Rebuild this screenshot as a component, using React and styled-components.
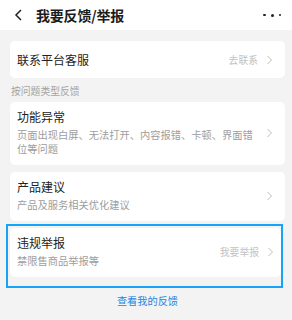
import styled, { createGlobalStyle } from 'styled-components'

const GlobalStyle = createGlobalStyle`
  html, body {
    margin: 0;
    padding: 0;
    background: #ffffff;
    font-family: 'Noto Sans CJK SC', 'Noto Sans', sans-serif;
  }
`

const Chevron = ({ color = '#bdbdbd' }) => (
  <svg width="7" height="10" viewBox="0 0 7 10">
    <polyline points="1.5,1 5.5,5 1.5,9" fill="none" stroke={color} strokeWidth="1" />
  </svg>
)

export default function App() {
  return (
    <Page>
      <GlobalStyle />
      <Header>
        <BackButton>
          <svg width="9" height="12" viewBox="0 0 9 12">
            <polyline points="7,1 2,6 7,11" fill="none" stroke="#222" strokeWidth="1.5" />
          </svg>
        </BackButton>
        <Title>我要反馈/举报</Title>
        <More>
          <Dot />
          <Dot big />
          <Dot />
        </More>
      </Header>
      <Body>
        <Card single>
          <CardTitle>联系平台客服</CardTitle>
          <Action>
            <ActionText>去联系</ActionText>
            <Chevron />
          </Action>
        </Card>
        <SectionLabel>按问题类型反馈</SectionLabel>
        <Card>
          <CardText>
            <CardTitle>功能异常</CardTitle>
            <CardDesc>页面出现白屏、无法打开、内容报错、卡顿、界面错位等问题</CardDesc>
          </CardText>
          <Action>
            <Chevron />
          </Action>
        </Card>
        <Card>
          <CardText>
            <CardTitle>产品建议</CardTitle>
            <CardDesc>产品及服务相关优化建议</CardDesc>
          </CardText>
          <Action>
            <Chevron />
          </Action>
        </Card>
        <Highlight>
          <Card>
            <CardText>
              <CardTitle>违规举报</CardTitle>
              <CardDesc>禁限售商品举报等</CardDesc>
            </CardText>
            <Action>
              <ActionText>我要举报</ActionText>
              <Chevron />
            </Action>
          </Card>
        </Highlight>
        <FooterLink>查看我的反馈</FooterLink>
      </Body>
    </Page>
  )
}

const Page = styled.div`
  width: 292px;
  height: 320px;
  display: flex;
  flex-direction: column;
  background: #ffffff;
`

const Header = styled.header`
  height: 31px;
  display: flex;
  align-items: center;
  padding: 0 11px 0 14px;
  background: #ffffff;
`

const BackButton = styled.div`
  width: 22px;
  display: flex;
  align-items: center;
`

const Title = styled.h1`
  margin: 0;
  flex: 1;
  font-size: 14px;
  font-weight: 700;
  color: #1c1c1c;
  line-height: 20px;
  letter-spacing: -0.2px;
`

const More = styled.div`
  display: flex;
  align-items: center;
  gap: 5px;
`

const Dot = styled.span`
  width: ${(props) => (props.big ? '3px' : '2.4px')};
  height: ${(props) => (props.big ? '3px' : '2.4px')};
  border-radius: 50%;
  background: #222;
`

const Body = styled.main`
  height: 284px;
  background: #f3f3f3;
  padding: 11px 7px 0 10px;
  display: flex;
  flex-direction: column;
`

const Card = styled.div`
  background: #ffffff;
  border-radius: 5px;
  display: flex;
  align-items: center;
  padding: ${(props) => (props.single ? '0 12px 0 7px' : '7px 12px 9px 7px')};
  height: ${(props) => (props.single ? '37px' : 'auto')};
  box-sizing: border-box;
  justify-content: space-between;
  & + & {
    margin-top: 7px;
  }
`

const CardText = styled.div`
  display: flex;
  flex-direction: column;
  gap: 3px;
  max-width: 241px;
`

const CardTitle = styled.div`
  font-size: 12px;
  line-height: 16px;
  color: #222222;
`

const CardDesc = styled.div`
  font-size: 10.25px;
  line-height: 14px;
  color: #9d9d9d;
`

const Action = styled.div`
  display: flex;
  align-items: center;
  gap: 8px;
`

const ActionText = styled.span`
  font-size: 9.8px;
  color: #c2c2c2;
`

const SectionLabel = styled.div`
  font-size: 9.8px;
  line-height: 14px;
  color: #a3a3a3;
  padding: 6px 0 0 1px;
  height: 24px;
  box-sizing: border-box;
`

const Highlight = styled.div`
  margin: 3px 2px 0 -4px;
  border: 2px solid #14a4f8;
  padding: 2px 0 9px 2px;
  ${Card} {
    height: 49px;
    padding: 6px 7px 8px 7px;
  }
`

const FooterLink = styled.div`
  height: 24px;
  display: flex;
  align-items: center;
  justify-content: center;
  font-size: 10.2px;
  color: #2586de;
`
